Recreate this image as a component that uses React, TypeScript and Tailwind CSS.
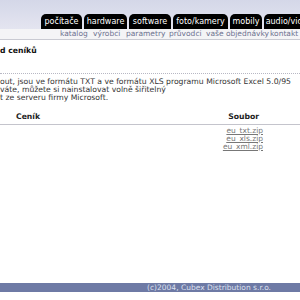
export default function App() {
  const tabs = [
    { label: 'počítače', w: 'w-[41px]' },
    { label: 'hardware', w: 'w-[43px]' },
    { label: 'software', w: 'w-[42px]' },
    { label: 'foto/kamery', w: 'w-[55px]' },
    { label: 'mobily', w: 'w-[32px]' },
    { label: 'audio/video', w: 'w-[50px]' },
  ];
  const links = [
    { label: 'katalog', w: 'w-[33px]' },
    { label: 'výrobci', w: 'w-[33px]' },
    { label: 'parametry', w: 'w-[43px]' },
    { label: 'průvodci', w: 'w-[37px]' },
    { label: 'vaše objednávky', w: 'w-[64px]' },
    { label: 'kontakt', w: 'w-[40px]' },
  ];
  const files = ['eu_txt.zip', 'eu_xls.zip', 'eu_xml.zip'];

  return (
    <div className="w-[300px] h-[300px] overflow-hidden bg-white flex flex-col font-['DejaVu_Sans',Verdana,sans-serif] text-[7.7px] text-[#222]">
      {/* ── top tabs ── */}
      <div className="h-[29px] shrink-0 flex items-end gap-[2px] pl-[41px] bg-gradient-to-b from-[#d4d7e8] to-[#e4e5f0] whitespace-nowrap">
        {tabs.map((t) => (
          <div
            key={t.label}
            className={`${t.w} shrink-0 h-[15px] rounded-t-[5px] bg-black text-white text-[8px] leading-[15px] text-center`}
          >
            {t.label}
          </div>
        ))}
      </div>

      {/* ── sub menu ── */}
      <div className="h-[11px] shrink-0 flex items-center pl-[60px] bg-[#f4f4f6] border-b border-[#c9cad2] text-[#6d7290] text-[7.5px] whitespace-nowrap">
        {links.map((l) => (
          <span key={l.label} className={`${l.w} shrink-0`}>{l.label}</span>
        ))}
      </div>

      {/* ── title ── */}
      <div className="mt-[7px] leading-[8px] font-bold text-[#111] whitespace-nowrap">d ceníků</div>
      <div className="mt-[18px] border-t border-dotted border-[#b8b8c4]" />

      {/* ── intro ── */}
      <div className="mt-[4px] leading-[8px] text-[#333] whitespace-nowrap">
        <p>out, jsou ve formátu TXT a ve formátu XLS programu Microsoft Excel 5.0/95</p>
        <p>váte, můžete si nainstalovat volně šiřitelný</p>
        <p>t ze serveru firmy Microsoft.</p>
      </div>

      {/* ── price list table ── */}
      <div className="mt-[11px] flex items-center leading-[8px] font-bold text-[#222] pb-[3px] border-b border-[#c4c4cc]">
        <span className="pl-[16px]">Ceník</span>
        <span className="ml-auto mr-[41px]">Soubor</span>
      </div>
      <div className="mt-[2px] flex flex-col items-end pr-[37px] leading-[8px] text-[7.5px]">
        {files.map((f) => (
          <a key={f} className="underline text-[#777]">{f}</a>
        ))}
      </div>

      {/* ── footer ── */}
      <div className="mt-auto mb-[8px] h-[9px] shrink-0 bg-[#6e7aa5] flex items-center justify-end pr-[29px] text-[7.5px] leading-[9px] text-[#dde0ef]">
        (c)2004, Cubex Distribution s.r.o.
      </div>
    </div>
  );
}
